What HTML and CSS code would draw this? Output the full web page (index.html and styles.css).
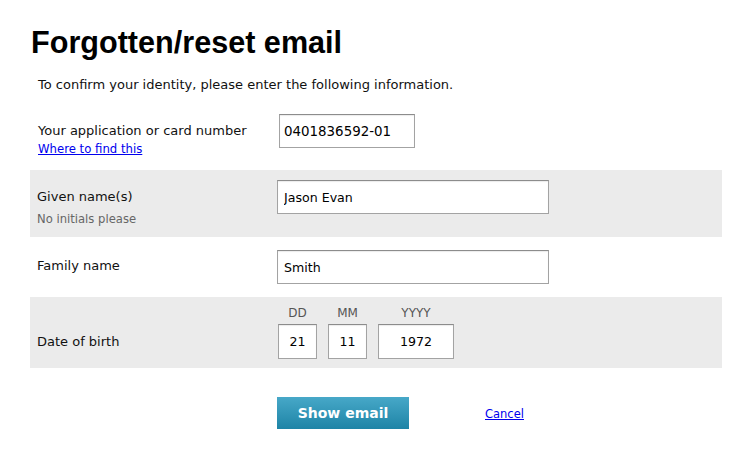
FILE: index.html
```html
<!DOCTYPE html>
<html lang="en">
<head>
<meta charset="utf-8">
<title>Forgotten/reset email</title>
<link rel="stylesheet" href="styles.css">
</head>
<body>
<div class="page">
  <h1 class="title">Forgotten/reset email</h1>
  <p class="intro">To confirm your identity, please enter the following information.</p>
  <form class="form">
    <div class="row row-card">
      <div class="label">
        <div class="label-text">Your application or card number</div>
        <a class="help-link" href="#">Where to find this</a>
      </div>
      <div class="field">
        <input class="input input-card" type="text" value="0401836592-01">
      </div>
    </div>
    <div class="row row-shaded row-given">
      <div class="label">
        <div class="label-text">Given name(s)</div>
        <div class="hint">No initials please</div>
      </div>
      <div class="field">
        <input class="input input-wide" type="text" value="Jason Evan">
      </div>
    </div>
    <div class="row row-family">
      <div class="label">
        <div class="label-text">Family name</div>
      </div>
      <div class="field">
        <input class="input input-wide" type="text" value="Smith">
      </div>
    </div>
    <div class="row row-shaded row-dob">
      <div class="label label-dob">
        <div class="label-text">Date of birth</div>
      </div>
      <div class="field dob">
        <div class="dob-part">
          <div class="dob-cap">DD</div>
          <input class="input input-dob input-dd" type="text" value="21">
        </div>
        <div class="dob-part">
          <div class="dob-cap">MM</div>
          <input class="input input-dob input-mm" type="text" value="11">
        </div>
        <div class="dob-part">
          <div class="dob-cap">YYYY</div>
          <input class="input input-dob input-yyyy" type="text" value="1972">
        </div>
      </div>
    </div>
    <div class="actions">
      <button class="btn" type="button">Show email</button>
      <a class="cancel" href="#">Cancel</a>
    </div>
  </form>
</div>
</body>
</html>
```
FILE: styles.css
```css
html, body {
  margin: 0;
  padding: 0;
  background: #ffffff;
}
body {
  font-family: "DejaVu Sans", "Liberation Sans", sans-serif;
  font-size: 13px;
  color: #111111;
}
.page {
  padding: 0 28px 0 30px;
}
.title {
  font-family: "Liberation Sans", Arial, sans-serif;
  font-weight: bold;
  font-size: 30.6px;
  margin: 0;
  padding: 27px 0 0 1px;
  line-height: 30px;
  color: #000000;
}
.intro {
  margin: 0;
  padding: 20px 0 0 8px;
  line-height: 16px;
  font-size: 13px;
}
.form {
  margin-top: 14px;
}
.row {
  display: flex;
  align-items: flex-start;
}
.row-shaded {
  background: #ebebeb;
}
.label {
  width: 240px;
  padding-left: 7px;
  flex: none;
}
.label-text {
  font-size: 13px;
  line-height: 16px;
}
.help-link {
  display: block;
  font-size: 11.7px;
  line-height: 14px;
  color: #0000ee;
  margin-top: 3px;
}
.hint {
  font-size: 11.6px;
  line-height: 14px;
  color: #666666;
  margin-top: 7px;
}
.input {
  font-family: "DejaVu Sans", sans-serif;
  font-size: 12.6px;
  color: #000000;
  border: 1px solid #a3a3a3;
  border-top-color: #8c8c8c;
  box-shadow: inset 0 1px 1px rgba(0,0,0,0.08);
  background: #ffffff;
  height: 34px;
  box-sizing: border-box;
  padding: 0 5px;
  margin: 0;
  outline: none;
}
.row-card {
  height: 63px;
  padding-top: 7px;
  box-sizing: border-box;
}
.row-card .label {
  padding-top: 9px;
  padding-left: 8px;
  width: 241px;
}
.input-card {
  width: 136px;
  font-size: 13.4px;
  padding-left: 4px;
}
.row-given {
  height: 67px;
  padding-top: 10px;
  box-sizing: border-box;
}
.row-given .label {
  padding-top: 9px;
}
.input-wide {
  width: 272px;
  padding-left: 6px;
}
.row-family {
  height: 60px;
  padding-top: 13px;
  box-sizing: border-box;
}
.row-family .label {
  padding-top: 8px;
}
.row-dob {
  height: 71px;
  padding-top: 9px;
  box-sizing: border-box;
}
.label-dob {
  padding-top: 28px;
}
.dob {
  display: flex;
  gap: 11px;
  padding-left: 1px;
}
.dob-part {
  display: flex;
  flex-direction: column;
  align-items: center;
}
.dob-cap {
  font-size: 12px;
  line-height: 14px;
  color: #555555;
  margin-bottom: 4px;
}
.input-dob {
  text-align: center;
  padding: 0;
  height: 35px;
}
.input-dd { width: 39px; }
.input-mm { width: 39px; }
.input-yyyy { width: 76px; }
.actions {
  display: flex;
  align-items: center;
  padding: 29px 0 0 247px;
}
.btn {
  width: 132px;
  height: 32px;
  border: none;
  background: linear-gradient(#47a8c8, #1e84a6);
  color: #ffffff;
  font-family: "DejaVu Sans", sans-serif;
  font-weight: bold;
  font-size: 14px;
  padding: 0 0 1px;
  margin: 0;
}
.cancel {
  margin-left: 76px;
  font-size: 11.5px;
  color: #0000ee;
  position: relative;
  top: 1px;
}
```
